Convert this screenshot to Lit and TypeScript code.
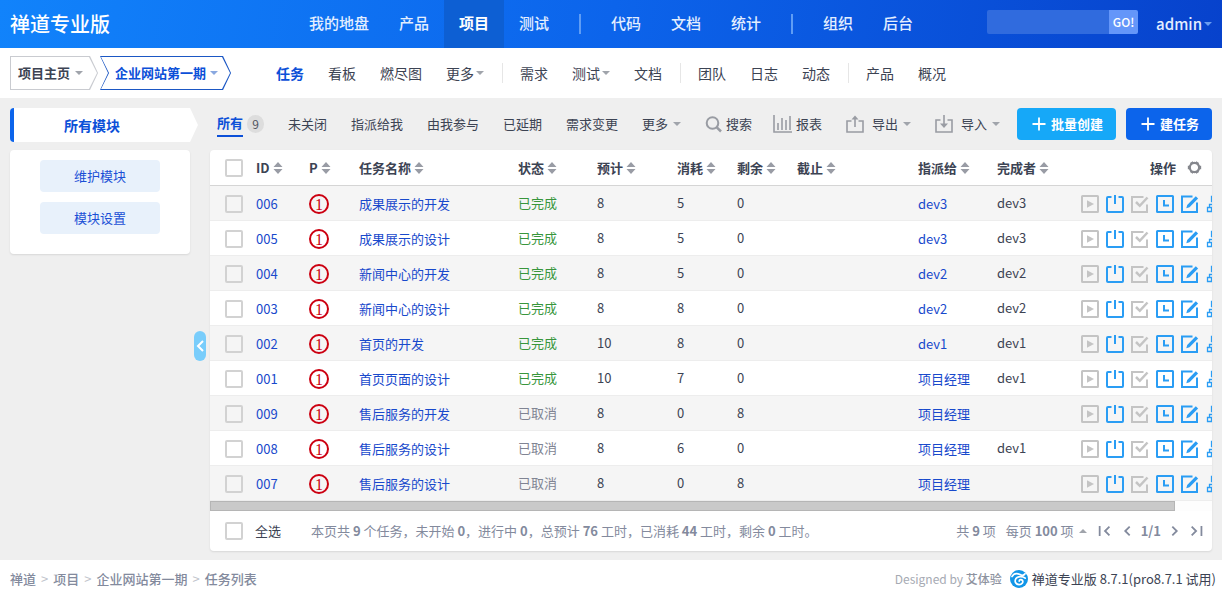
import { LitElement, html, css, svg } from "lit";
import { customElement } from "lit/decorators.js";
import { classMap } from "lit/directives/class-map.js";

interface NavItem {
  text: string;
  active?: boolean;
  caret?: boolean;
}

interface Task {
  id: string;
  name: string;
  done: boolean;
  estimate: number;
  consumed: number;
  left: number;
  assignee: string;
  finisher: string;
}

// null marks a divider between groups
const MAIN_NAV: (NavItem | null)[] = [
  { text: "我的地盘" },
  { text: "产品" },
  { text: "项目", active: true },
  { text: "测试" },
  null,
  { text: "代码" },
  { text: "文档" },
  { text: "统计" },
  null,
  { text: "组织" },
  { text: "后台" },
];

const SUB_NAV: (NavItem | null)[] = [
  { text: "任务", active: true },
  { text: "看板" },
  { text: "燃尽图" },
  { text: "更多", caret: true },
  null,
  { text: "需求" },
  { text: "测试", caret: true },
  { text: "文档" },
  null,
  { text: "团队" },
  { text: "日志" },
  { text: "动态" },
  null,
  { text: "产品" },
  { text: "概况" },
];

const FILTERS = ["未关闭", "指派给我", "由我参与", "已延期", "需求变更"];

const COLUMNS = [
  ["id", "ID"],
  ["pri", "P"],
  ["name", "任务名称"],
  ["status", "状态"],
  ["num", "预计"],
  ["short", "消耗"],
  ["short", "剩余"],
  ["deadline", "截止"],
  ["status", "指派给"],
  ["num", "完成者"],
];

const task = (
  id: string,
  name: string,
  done: boolean,
  estimate: number,
  consumed: number,
  left: number,
  assignee: string,
  finisher: string
): Task => ({ id, name, done, estimate, consumed, left, assignee, finisher });

const TASKS: Task[] = [
  task("006", "成果展示的开发", true, 8, 5, 0, "dev3", "dev3"),
  task("005", "成果展示的设计", true, 8, 5, 0, "dev3", "dev3"),
  task("004", "新闻中心的开发", true, 8, 5, 0, "dev2", "dev2"),
  task("003", "新闻中心的设计", true, 8, 8, 0, "dev2", "dev2"),
  task("002", "首页的开发", true, 10, 8, 0, "dev1", "dev1"),
  task("001", "首页页面的设计", true, 10, 7, 0, "项目经理", "dev1"),
  task("009", "售后服务的开发", false, 8, 0, 8, "项目经理", ""),
  task("008", "售后服务的设计", false, 8, 6, 0, "项目经理", "dev1"),
  task("007", "售后服务的设计", false, 8, 0, 8, "项目经理", ""),
];

const glyphs = {
  start: svg`<rect x="1" y="1" width="16" height="16" rx="0.5"/><path d="M6 5.2v7.6l7-3.8z" fill="currentColor" stroke="none"/>`,
  finish: svg`<path d="M5.500 2H2a1 1 0 0 0-1 1v13a1 1 0 0 0 1 1h14a1 1 0 0 0 1-1V3a1 1 0 0 0-1-1h-3.500M9 0v9"/>`,
  close: svg`<path d="M12.500 2H1v15h15V9.500"/><path d="M5 7l3.800 3.800L16.500 2.500" stroke-width="2.500"/>`,
  effort: svg`<rect x="1" y="1" width="16" height="16" rx="0.5"/><path d="M8 5v5.500h5"/>`,
  edit: svg`<path d="M11.500 1.500H1v15.500h15V7.500"/><path d="M5.300 13.200l.9-3.300 8.600-8.600 2.300 2.300-8.600 8.600z" fill="currentColor" stroke="none"/>`,
  split: svg`<path d="M5.500 1.500h7v5h-7zM9 6.500v3M3.500 12.500v-3h11v3M1.500 12.500h4v4h-4zM12.500 12.500h4v4h-4z" stroke-width="1.300"/>`,
  search: svg`<circle cx="7.500" cy="8" r="5.800"/><path d="M11.800 12.300L16 16.500" stroke-width="2.500"/>`,
  report: svg`<path d="M1 0v17h18M5 15V8M9 15V3M13 15V5M17 15V1" stroke-width="1.600"/>`,
  export: svg`<path d="M5.500 6H1v11h16V6h-4.500M9 12V2" stroke-width="1.600"/><path d="M5.500 4.500L9 0.500l3.500 4z" fill="currentColor" stroke="none"/>`,
  import: svg`<path d="M5.500 5H1v12h16V5h-4.500M9 0v10" stroke-width="1.600"/><path d="M5 8.500h8L9 13z" fill="currentColor" stroke="none"/>`,
  plus: svg`<path d="M9 2.500v13M2.500 9h13" stroke-width="1.800"/>`,
  gear: svg`<circle cx="9" cy="9" r="5.600" stroke-width="2.600"/><path d="M5.200 2.500l1 1.700M12.800 2.500l-1 1.700M5.200 15.500l1-1.700M12.800 15.500l-1-1.700M1 9h2M15 9h2" stroke-width="4"/>`,
  first: svg`<path d="M3 3.500v11M14 4L9 9l5 5"/>`,
  prev: svg`<path d="M12 4L7 9l5 5"/>`,
  next: svg`<path d="M6 4l5 5-5 5"/>`,
  last: svg`<path d="M14 3.500v11M3 4l5 5-5 5"/>`,
};

const icon = (name: keyof typeof glyphs) =>
  html`<svg class="icon ${name}" viewBox="0 0 ${name === "report" ? 20 : 18} 18" aria-hidden="true">
    ${glyphs[name]}
  </svg>`;

const ACTIONS: [keyof typeof glyphs, string, boolean][] = [
  ["start", "开始", false],
  ["finish", "关闭", true],
  ["close", "完成", false],
  ["effort", "工时", true],
  ["edit", "编辑", true],
  ["split", "分解", true],
];

@customElement("app-root")
export class AppRoot extends LitElement {
  static styles = css`
    :host {
      display: flex;
      flex-direction: column;
      min-height: 100vh;
      background: #efefef;
      color: #3c4353;
      font: 13px/20px "Noto Sans CJK SC", "Noto Sans", sans-serif;
    }
    *,
    *::before,
    *::after {
      box-sizing: border-box;
    }
    a {
      color: inherit;
      text-decoration: none;
    }
    button,
    input {
      font: inherit;
      color: inherit;
      margin: 0;
      padding: 0;
      border: 0;
      background: none;
    }
    .icon {
      width: 18px;
      height: 18px;
      flex: none;
      fill: none;
      stroke: currentColor;
      stroke-width: 2;
    }
    .caret {
      flex: none;
      border: 4px solid transparent;
      border-top-color: #a0a4ab;
      border-bottom: 0;
    }
    .caret.up {
      border-top: 0;
      border-bottom: 4px solid #a0a4ab;
    }

    .header,
    .subheader {
      display: grid;
      grid-template-columns: 1fr auto 1fr;
      align-items: center;
      padding: 0 10px;
      white-space: nowrap;
    }
    .header {
      height: 48px;
      color: #e3eeff;
      background: linear-gradient(100deg, #1183fb 0%, #0c64eb 50%, #0742cc 100%);
    }
    .logo {
      margin: 0;
      font-size: 20px;
      line-height: 48px;
      font-weight: 500;
      color: #fff;
    }
    .nav {
      display: flex;
      align-items: center;
    }
    .header .nav a {
      padding: 0 15px 2px;
      font-size: 15px;
      line-height: 46px;
      font-weight: 500;
    }
    .header .nav a.active {
      background: #0d5fd3;
      color: #fff;
      font-weight: 700;
    }
    .divider {
      display: flex;
      justify-content: center;
      width: 12px;
    }
    .divider::before {
      content: "";
      width: 1px;
      height: 20px;
      background: #e6e6e6;
    }
    .header .divider {
      width: 32px;
    }
    .header .divider::before {
      width: 2px;
      background: #5f9df5;
    }
    .account {
      display: flex;
      justify-content: flex-end;
      align-items: center;
    }
    .searchbox {
      display: flex;
      height: 24px;
      margin: -4px 18px 0 0;
    }
    .searchbox input {
      width: 122px;
      background: #306bde;
      border-radius: 2px 0 0 2px;
    }
    .searchbox button {
      width: 29px;
      background: #6496f9;
      border-radius: 0 2px 2px 0;
      font-size: 12px;
      font-weight: 500;
      color: #fff;
    }
    .user {
      display: flex;
      align-items: center;
      gap: 2px;
      font-size: 15px;
      font-weight: 500;
    }
    .user .caret {
      border-width: 4px 4px 0;
      border-top-color: #6b9df0;
    }

    .subheader {
      height: 50px;
      background: #fff;
    }
    .subheader .nav a {
      display: flex;
      align-items: center;
      gap: 2px;
      padding: 0 12px;
      font-size: 14px;
    }
    .subheader .nav a.active {
      font-weight: 700;
      color: #0c50d8;
    }
    .crumbs {
      display: flex;
      gap: 2px;
    }
    .crumb {
      position: relative;
      z-index: 0;
      display: flex;
      align-items: center;
      gap: 5px;
      height: 34px;
      padding: 0 15px 0 8px;
      font-weight: 700;
      background: #c9cbd0;
      clip-path: polygon(0 0, calc(100% - 8px) 0, 100% 50%, calc(100% - 8px) 100%, 0 100%);
    }
    .crumb::before {
      content: "";
      position: absolute;
      z-index: -1;
      inset: 1px;
      background: #fff;
      clip-path: polygon(0 0, calc(100% - 8px) 0, 100% 50%, calc(100% - 8px) 100%, 0 100%);
    }
    .crumb.current {
      gap: 4px;
      padding: 0 13px 0 15px;
      color: #0c50d8;
      background: #1b57c4;
    }
    .crumb.current,
    .crumb.current::before {
      clip-path: polygon(0 0, calc(100% - 8px) 0, 100% 50%, calc(100% - 8px) 100%, 0 100%, 8px 50%);
    }
    .crumb.current .caret {
      border-top-color: #89a8e0;
    }

    .toolbar {
      display: flex;
      align-items: center;
      height: 52px;
      padding: 0 10px;
      white-space: nowrap;
    }
    .module {
      width: 188px;
      height: 34px;
      margin: 2px 7px 0 0;
      padding-right: 28px;
      border-left: 4px solid #0c64eb;
      border-radius: 4px;
      background: #fff;
      clip-path: polygon(0 0, calc(100% - 8px) 0, 100% 50%, calc(100% - 8px) 100%, 0 100%);
      color: #0c50d8;
      font-size: 14px;
      line-height: 34px;
      font-weight: 700;
      text-align: center;
    }
    .filters,
    .tools {
      display: flex;
      align-items: center;
      gap: 24px;
    }
    .filters {
      flex: 1;
      padding-left: 12px;
    }
    .tab {
      display: flex;
      align-items: center;
      gap: 5px;
    }
    .tab.active {
      gap: 4px;
      color: #0c50d8;
      font-weight: 700;
    }
    .tab.active .label {
      padding: 2px 0;
      border-bottom: 2px solid #0c50d8;
    }
    .badge {
      width: 17px;
      border-radius: 9px;
      background: #ddd;
      color: #50555f;
      font-size: 12px;
      line-height: 18px;
      font-weight: 400;
      text-align: center;
    }
    .tool {
      display: flex;
      align-items: center;
      gap: 5px;
    }
    .tool .icon {
      color: #999ca3;
    }
    .tool .report {
      width: 20px;
    }
    .tool .report,
    .tool .search {
      margin-right: -2px;
    }
    .tool .export,
    .tool .import {
      margin-right: 3px;
    }
    .creates {
      display: flex;
      gap: 10px;
      margin-left: 17px;
    }
    .create {
      display: flex;
      align-items: center;
      gap: 3px;
      height: 32px;
      padding: 0 13px;
      border-radius: 4px;
      background: #0c64eb;
      color: #fff;
      font-weight: 700;
    }
    .create.batch {
      background: #16a8f8;
    }

    .main {
      display: grid;
      grid-template-columns: 180px 1fr;
      gap: 20px;
      padding: 0 10px 9px;
      flex: 1;
      align-items: start;
      position: relative;
    }
    .panel {
      min-width: 0;
      overflow: hidden;
      border-radius: 4px;
      background: #fff;
      box-shadow: 0 1px 2px rgba(0, 0, 0, 0.1);
    }
    .side {
      display: flex;
      flex-direction: column;
      align-items: center;
      gap: 10px;
      padding: 10px 10px 20px;
    }
    .side a {
      width: 120px;
      border-radius: 4px;
      background: #e8f1fb;
      color: #1a4fd6;
      line-height: 32px;
      text-align: center;
    }
    .collapse {
      position: absolute;
      left: 194px;
      top: 181px;
      display: flex;
      align-items: center;
      justify-content: center;
      width: 12px;
      height: 30px;
      border-radius: 6px;
      background: #79cdfb;
      color: #fff;
    }

    .scroll {
      overflow: hidden;
    }
    table {
      width: 100%;
      min-width: 1040px;
      table-layout: fixed;
      border-collapse: separate;
      border-spacing: 0;
      white-space: nowrap;
    }
    th,
    td {
      height: 35px;
      padding: 0 5px;
      border-bottom: 1px solid #ededed;
      text-align: left;
    }
    th {
      height: 36px;
      border-bottom-color: #d5d5d5;
    }
    td.item {
      padding-top: 2px;
    }
    tbody tr:nth-child(odd) {
      background: #f5f5f5;
    }
    .c-check {
      width: 41px;
      padding-left: 15px;
    }
    .c-id {
      width: 53px;
    }
    .c-pri {
      width: 50px;
    }
    .c-status {
      width: 79px;
    }
    .c-num {
      width: 80px;
    }
    .c-short {
      width: 60px;
    }
    .c-deadline {
      width: 121px;
    }
    .c-ops {
      width: 178px;
      padding-left: 9px;
    }
    td a {
      color: #1849cc;
    }
    .sort {
      display: flex;
      align-items: center;
      gap: 3px;
      font-weight: 700;
    }
    .sort svg {
      width: 10px;
      height: 12px;
      fill: #999ca5;
    }
    .check {
      appearance: none;
      display: block;
      width: 18px;
      height: 18px;
      border: 2px solid #d2d2d2;
      border-radius: 2px;
      background: transparent;
    }
    .check:checked {
      background: #0c64eb;
    }
    .priority {
      display: block;
      width: 20px;
      height: 20px;
      border: 2px solid #cc0011;
      border-radius: 50%;
      color: #cc0011;
      font: 16px/17px "Liberation Serif", serif;
      text-align: center;
    }
    .done {
      color: #38963c;
    }
    .cancelled {
      color: #808493;
    }
    .ops-head {
      display: flex;
      align-items: center;
      gap: 11px;
      padding-left: 69px;
    }
    .ops-head .icon {
      width: 15px;
      height: 15px;
      color: #85878d;
    }
    .ops {
      display: flex;
      gap: 7px;
    }
    .ops button {
      display: flex;
      color: #2a9df4;
    }
    .ops button:disabled {
      color: #c4c4c4;
    }
    .bar {
      height: 10px;
      background: #fdfdfd;
    }
    .thumb {
      height: 10px;
      background: #c9c9c9;
      border: 1px solid #b5b5b5;
    }
    .summary {
      display: flex;
      align-items: center;
      height: 40px;
      padding: 0 7px 0 15px;
      color: #838a9d;
      white-space: nowrap;
    }
    .all {
      display: flex;
      align-items: center;
      gap: 12px;
      margin-right: 30px;
      color: #3c4353;
    }
    .stats {
      flex: 1;
    }
    .pager {
      display: flex;
      align-items: center;
      gap: 6px;
    }
    .size {
      display: flex;
      align-items: center;
      gap: 5px;
      margin: 0 4px;
    }
    .page {
      display: flex;
    }
    .page .icon {
      width: 16px;
      height: 16px;
    }

    .footer {
      display: flex;
      align-items: center;
      justify-content: space-between;
      height: 34px;
      padding: 3px 6px 0 10px;
      background: #fff;
      white-space: nowrap;
    }
    .path {
      display: flex;
      gap: 5px;
      color: #838a9d;
      font-weight: 500;
    }
    .path .sep {
      color: #c0c3cb;
      font-weight: 400;
    }
    .powered {
      display: flex;
      align-items: center;
      gap: 8px;
      color: #a6aab3;
      font-size: 12px;
    }
    .powered b {
      color: #8e939f;
      font-weight: 500;
    }
    .brand {
      display: flex;
      align-items: center;
      gap: 4px;
      color: #3c4353;
      font-size: 13px;
    }
    .brand svg {
      width: 18px;
      height: 18px;
    }
  `;

  private nav(items: (NavItem | null)[], label: string) {
    return html`<nav class="nav" aria-label=${label}>
      ${items.map((item) =>
        item
          ? html`<a href="#" class=${classMap({ active: !!item.active })}
              >${item.text}${item.caret ? html`<span class="caret"></span>` : ""}</a
            >`
          : html`<span class="divider"></span>`
      )}
    </nav>`;
  }

  private row(t: Task) {
    return html`<tr>
      <td class="item c-check"><input class="check" type="checkbox" aria-label=${t.id} /></td>
      <td class="item"><a href="#">${t.id}</a></td>
      <td class="item"><span class="priority">1</span></td>
      <td class="item"><a href="#">${t.name}</a></td>
      <td class=${t.done ? "done" : "cancelled"}>${t.done ? "已完成" : "已取消"}</td>
      <td>${t.estimate}</td>
      <td>${t.consumed}</td>
      <td>${t.left}</td>
      <td></td>
      <td class="item"><a href="#">${t.assignee}</a></td>
      <td>${t.finisher}</td>
      <td class="item c-ops">
        <div class="ops">
          ${ACTIONS.map(
            ([name, label, enabled]) =>
              html`<button aria-label=${label} ?disabled=${!enabled}>${icon(name)}</button>`
          )}
        </div>
      </td>
    </tr>`;
  }

  render() {
    return html`
      <header class="header">
        <h1 class="logo">禅道专业版</h1>
        ${this.nav(MAIN_NAV, "主导航")}
        <div class="account">
          <form class="searchbox">
            <input type="text" aria-label="搜索" /><button type="button">GO!</button>
          </form>
          <a class="user" href="#">admin<span class="caret"></span></a>
        </div>
      </header>

      <div class="subheader">
        <div class="crumbs">
          <a class="crumb" href="#">项目主页<span class="caret"></span></a>
          <a class="crumb current" href="#">企业网站第一期<span class="caret"></span></a>
        </div>
        ${this.nav(SUB_NAV, "项目导航")}
      </div>

      <div class="toolbar">
        <div class="module">所有模块</div>
        <div class="filters">
          <a class="tab active" href="#"><span class="label">所有</span><span class="badge">9</span></a>
          ${FILTERS.map((f) => html`<a class="tab" href="#">${f}</a>`)}
          <a class="tab" href="#">更多<span class="caret"></span></a>
          <button class="tool">${icon("search")}搜索</button>
        </div>
        <div class="tools">
          <button class="tool">${icon("report")}报表</button>
          <button class="tool">${icon("export")}导出<span class="caret"></span></button>
          <button class="tool">${icon("import")}导入<span class="caret"></span></button>
        </div>
        <div class="creates">
          <button class="create batch">${icon("plus")}批量创建</button>
          <button class="create">${icon("plus")}建任务</button>
        </div>
      </div>

      <main class="main">
        <aside class="panel side">
          <a href="#">维护模块</a>
          <a href="#">模块设置</a>
        </aside>
        <button class="collapse" aria-label="收起">${icon("prev")}</button>
        <section class="panel">
          <div class="scroll">
            <table>
              <thead>
                <tr>
                  <th class="c-check"><input class="check" type="checkbox" aria-label="全部任务" /></th>
                  ${COLUMNS.map(
                    ([kind, label]) => html`<th class="c-${kind}">
                      <button class="sort">
                        ${label}<svg viewBox="0 0 10 12" aria-hidden="true">
                          <path d="M0.500 5L5 0l4.500 5zM0.500 7L5 12l4.500-5z" />
                        </svg>
                      </button>
                    </th>`
                  )}
                  <th class="c-ops"><div class="ops-head">操作${icon("gear")}</div></th>
                </tr>
              </thead>
              <tbody>
                ${TASKS.map((t) => this.row(t))}
              </tbody>
            </table>
          </div>
          <div class="bar"><div class="thumb" style="width: ${(1002 / 1040) * 100}%"></div></div>
          <div class="summary">
            <label class="all"><input class="check" type="checkbox" />全选</label>
            <span class="stats"
              >本页共 <b>9</b> 个任务，未开始 <b>0</b>，进行中 <b>0</b>，总预计 <b>76</b> 工时，已消耗
              <b>44</b> 工时，剩余 <b>0</b> 工时。</span
            >
            <div class="pager">
              <span>共 <b>9</b> 项</span>
              <button class="size"><span>每页 <b>100</b> 项</span><span class="caret up"></span></button>
              <button class="page" aria-label="首页">${icon("first")}</button>
              <button class="page" aria-label="上一页">${icon("prev")}</button>
              <b>1/1</b>
              <button class="page" aria-label="下一页">${icon("next")}</button>
              <button class="page" aria-label="末页">${icon("last")}</button>
            </div>
          </div>
        </section>
      </main>

      <footer class="footer">
        <nav class="path" aria-label="当前位置">
          <a href="#">禅道</a><span class="sep">&gt;</span><a href="#">项目</a><span class="sep">&gt;</span
          ><a href="#">企业网站第一期</a><span class="sep">&gt;</span><span>任务列表</span>
        </nav>
        <div class="powered">
          <span>Designed by <b>艾体验</b></span>
          <a class="brand" href="#">
            <svg viewBox="0 0 18 18" aria-hidden="true">
              <circle cx="9" cy="9" r="9" fill="#1296e8" />
              <path
                d="M2 6.500C4 3.200 7.500 3.300 10 4.600c2 1 4 .8 5-.8M15.200 8.200C12.500 5.800 7.500 6 5.800 8.800c-1.600 2.800.2 5.900 3.400 5.900 2.600 0 4.300-2.400 3.300-4.200-.9-1.400-3.300-1-3.300.6"
                fill="none"
                stroke="#fff"
                stroke-width="1.700"
                stroke-linecap="round"
              />
            </svg>
            禅道专业版 8.7.1(pro8.7.1 试用)
          </a>
        </div>
      </footer>
    `;
  }
}
